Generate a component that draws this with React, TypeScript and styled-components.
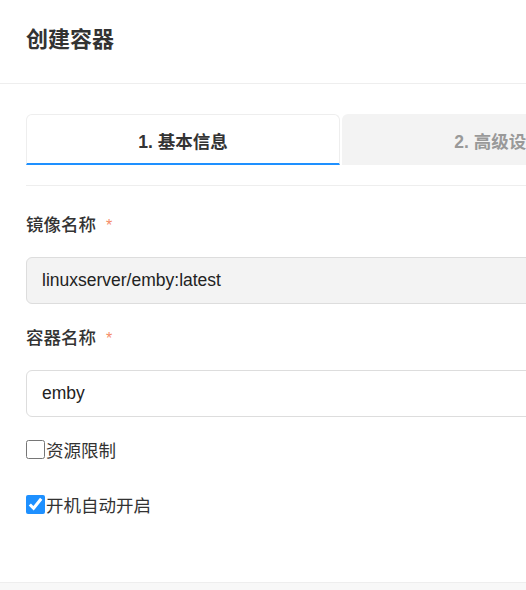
import React, { useState } from "react";
import styled, { createGlobalStyle } from "styled-components";

const GlobalStyle = createGlobalStyle`
  html, body {
    margin: 0;
    padding: 0;
    background: #fff;
    overflow: hidden;
  }
  body {
    font-family: "Liberation Sans", "Noto Sans CJK SC", sans-serif;
    color: #333;
  }
`;

const Modal = styled.div`
  width: 682px;
  background: #fff;
`;

const Header = styled.div`
  height: 83px;
  display: flex;
  align-items: center;
  padding: 0 26px;
  border-bottom: 1px solid #eee;
  box-sizing: content-box;
`;

const Title = styled.h2`
  margin: 0;
  font-size: 22px;
  font-weight: 700;
  color: #333;
  line-height: 1;
  padding-bottom: 3px;
`;

const Body = styled.div`
  padding: 30px 26px 66px;
`;

const TabBar = styled.div`
  display: grid;
  grid-template-columns: 1fr 1fr;
  gap: 2px;
  padding-bottom: 20px;
  border-bottom: 1px solid #eee;
`;

const Tab = styled.div<{ $active?: boolean }>`
  height: 51px;
  box-sizing: border-box;
  display: flex;
  align-items: center;
  justify-content: center;
  font-size: 17.5px;
  font-weight: 700;
  color: ${({ $active }) => ($active ? "#333" : "#999")};
  background: ${({ $active }) => ($active ? "#fff" : "#f3f3f3")};
  border: ${({ $active }) => ($active ? "1px solid #eee" : "none")};
  border-bottom: ${({ $active }) => ($active ? "2px solid #1e90ff" : "none")};
  border-radius: 6px 6px 0 0;
  padding-top: 2px;
`;

const Field = styled.div`
  display: flex;
  flex-direction: column;
  gap: 19px;
  margin-top: 27px;

  & + & {
    margin-top: 22px;
  }
`;

const Label = styled.label`
  font-size: 17.5px;
  line-height: 24px;
  font-weight: 500;
  color: #333;
`;

const Required = styled.span`
  color: #f58b67;
  margin-left: 10px;
  font-size: 16px;
`;

const Input = styled.input<{ $readOnly?: boolean }>`
  height: 47px;
  box-sizing: border-box;
  width: 100%;
  padding: 0 15px;
  font-family: "Liberation Sans", "Noto Sans CJK SC", sans-serif;
  font-size: 17.5px;
  color: #222;
  background: ${({ $readOnly }) => ($readOnly ? "#f3f3f3" : "#fff")};
  border: 1px solid #ddd;
  border-radius: 6px;
  outline: none;
`;

const CheckRow = styled.label<{ $first?: boolean }>`
  display: flex;
  align-items: center;
  height: 24px;
  margin-top: ${({ $first }) => ($first ? "20px" : "31px")};
  font-size: 17.5px;
  color: #333;
  cursor: pointer;
`;

const Check = styled.input`
  width: 19px;
  height: 19px;
  margin: 0 1px 0 0;
  accent-color: #1e90ff;
`;

const Footer = styled.div`
  border-top: 1px solid #eee;
  background: #f8f8f8;
  height: 60px;
`;

export default function App() {
  const [name, setName] = useState("emby");
  const [limit, setLimit] = useState(false);
  const [autoStart, setAutoStart] = useState(true);

  return (
    <>
      <GlobalStyle />
      <Modal>
        <Header>
          <Title>创建容器</Title>
        </Header>
        <Body>
          <TabBar>
            <Tab $active>1. 基本信息</Tab>
            <Tab>2. 高级设置</Tab>
          </TabBar>
          <Field>
            <Label>
              镜像名称<Required>*</Required>
            </Label>
            <Input $readOnly readOnly value="linuxserver/emby:latest" />
          </Field>
          <Field>
            <Label>
              容器名称<Required>*</Required>
            </Label>
            <Input value={name} onChange={(e) => setName(e.target.value)} />
          </Field>
          <CheckRow $first>
            <Check type="checkbox" checked={limit} onChange={(e) => setLimit(e.target.checked)} />
            资源限制
          </CheckRow>
          <CheckRow>
            <Check type="checkbox" checked={autoStart} onChange={(e) => setAutoStart(e.target.checked)} />
            开机自动开启
          </CheckRow>
        </Body>
        <Footer />
      </Modal>
    </>
  );
}
